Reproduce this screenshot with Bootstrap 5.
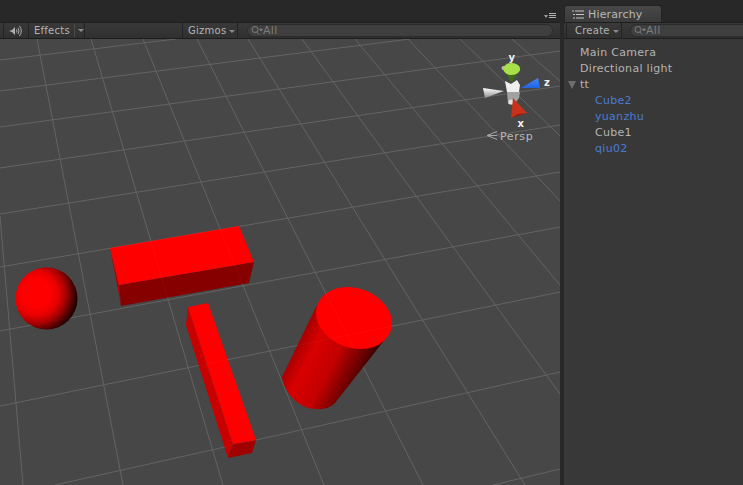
<!DOCTYPE html>
<html lang="en">
<head>
    <meta charset="UTF-8">
    <meta name="viewport" content="width=device-width, initial-scale=1.0">
    <title>Scene and Hierarchy</title>
    <link href="https://cdn.jsdelivr.net/npm/bootstrap@5.3.3/dist/css/bootstrap.min.css" rel="stylesheet">
    <style>
        html, body {
            height: 100%;
            overflow: hidden;
            background: #282828;
        }
        body {
            font-family: "DejaVu Sans", sans-serif;
            font-size: 11px;
            letter-spacing: .3px;
            color: #b4b4b4;
        }
        .editor { height: 485px; width: 743px; }
        .scene-pane { width: 560px; }
        .hier-pane { width: 179px; margin-left: 4px; }
        .tab-strip { height: 22px; background: #282828; }
        .menu-icon { margin: 0 4px 3px 0; }
        .hier-tab {
            width: 98px;
            height: 17px;
            background: linear-gradient(#474747, #3b3b3b);
            border: 1px solid #232323;
            border-bottom: 0;
            border-radius: 3px 3px 0 0;
            color: #b8b8b8;
            font-size: 11px;
            letter-spacing: .15px;
            padding: 1px 0 0 7px;
            line-height: 15px;
        }
        .tool-bar {
            height: 17px;
            background: linear-gradient(#393939, #303030);
            border-top: 1px solid #1e1e1e;
            border-bottom: 1px solid #1e1e1e;
            line-height: 15px;
            font-size: 10px;
            letter-spacing: .25px;
        }
        .tool-cell {
            border-left: 1px solid #232323;
            border-right: 1px solid #232323;
            height: 15px;
            white-space: nowrap;
        }
        .cell-sound { width: 26px; margin-left: 3px; }
        .cell-effects { width: 57px; margin-left: -1px; padding-left: 5px; }
        .cell-gizmos { width: 56px; margin-left: auto; padding-left: 5px; }
        .cell-create { width: 56px; margin-left: 2px; padding-left: 8px; }
        .caret-sep { border-left: 1px solid #4a4a4a; height: 13px; margin-left: 4px; padding-left: 3px; }
        .mini-caret {
            display: inline-block;
            border: 3px solid transparent;
            border-top: 3px solid #8c8c8c;
            border-bottom: 0;
            vertical-align: 1px;
            margin-left: 3px;
        }
        .caret-sep .mini-caret { margin-left: 0; }
        .search-pill {
            height: 13px;
            background: #3f3f3f;
            border: 1px solid #2b2b2b;
            border-radius: 7px;
            color: #7d7d7d;
            line-height: 11px;
            font-size: 11px;
            letter-spacing: .3px;
            padding-left: 3px;
        }
        .scene-search { width: 306px; margin: 0 7px 0 9px; }
        .hier-search { flex: 1; margin: 0 -8px 0 8px; }
        .scene-view { background: #474747; height: 446px; }
        .hier-body { background: #383838; height: 446px; padding-top: 6px; }
        .hier-body .list-group-item {
            background: transparent;
            border: 0;
            color: #b4b4b4;
            height: 16px;
            line-height: 16px;
            padding: 0 0 0 16px;
        }
        .hier-body .list-group-item.nested { padding-left: 31px; }
        .hier-body .list-group-item.prefab { color: #4a7bd2; }
        .fold-arrow {
            border-left: 4px solid transparent;
            border-right: 4px solid transparent;
            border-top: 8px solid #6e6e6e;
            margin: 0 4px 0 4px;
            width: 0;
            height: 0;
            position: absolute;
            left: 0;
            top: 4px;
        }
        .grid-lines { stroke: #fff; stroke-width: 1; }
        .gizmo-label { font-family: "DejaVu Sans", sans-serif; font-weight: 700; font-size: 10px; fill: #f0f0f0; letter-spacing: 0; }
        .persp-label { font-family: "DejaVu Sans", sans-serif; font-size: 11px; fill: #b8b8b8; letter-spacing: .6px; }
    </style>
</head>
<body>
    <div class="editor d-flex">
        <div class="scene-pane d-flex flex-column">
            <div class="tab-strip d-flex justify-content-end align-items-end">
                <svg class="menu-icon" width="12" height="6" viewBox="0 0 12 6">
                    <path d="M0 2h4L2 5z" fill="#a0a0a0"/>
                    <path d="M5 .5h7M5 2.5h7M5 4.5h7" stroke="#b0b0b0" stroke-width="1"/>
                </svg>
            </div>
            <div class="tool-bar d-flex align-items-center">
                <div class="tool-cell cell-sound d-flex align-items-center justify-content-center">
                    <svg width="14" height="12" viewBox="0 0 14 12">
                        <path d="M0 6l3-1 3-3v8l-3-3z" fill="#b0b0b0"/>
                        <path d="M7.500 4.500q1 1.500 0 3M9 3q2 3 0 6M10.500 1q3.500 5 0 10" fill="none" stroke="#b0b0b0" stroke-width="1"/>
                    </svg>
                </div>
                <div class="tool-cell cell-effects d-flex align-items-center">
                    <span>Effects</span>
                    <span class="caret-sep d-flex align-items-center"><span class="mini-caret"></span></span>
                </div>
                <div class="tool-cell cell-gizmos">Gizmos<span class="mini-caret"></span></div>
                <div class="search-pill scene-search d-flex align-items-center">
                    <svg width="12" height="9" viewBox="0 0 12 9">
                        <circle cx="4" cy="3.500" r="3" fill="none" stroke="#7d7d7d"/>
                        <path d="M6 6L8 8.500M8.500 3h3L10 5z" stroke="#7d7d7d" fill="#7d7d7d" stroke-width=".8"/>
                    </svg>
                    <span>All</span>
                </div>
            </div>
            <div class="scene-view">
                <svg class="d-block" width="560" height="446" viewBox="0 39 560 446">
                    <defs>
                        <radialGradient id="ballFill" cx=".33" cy=".42" r=".74">
                            <stop offset=".3" stop-color="#ff0000"/>
                            <stop offset=".48" stop-color="#e80000"/>
                            <stop offset=".65" stop-color="#a80000"/>
                            <stop offset=".82" stop-color="#4a0000"/>
                            <stop offset=".95" stop-color="#0a0000"/>
                        </radialGradient>
                        <linearGradient id="tubeFill" gradientUnits="userSpaceOnUse" x1="284" y1="352" x2="362" y2="392">
                            <stop offset="0" stop-color="#8c0000"/>
                            <stop offset=".28" stop-color="#d80000"/>
                            <stop offset=".55" stop-color="#c40000"/>
                            <stop offset=".82" stop-color="#6a0000"/>
                            <stop offset="1" stop-color="#180000"/>
                        </linearGradient>
                        <linearGradient id="coneBlue" x1="0" y1="0" x2="0" y2="1">
                            <stop offset="0" stop-color="#3f8af8"/>
                            <stop offset="1" stop-color="#2462e0"/>
                        </linearGradient>
                        <linearGradient id="coneWhite" x1="0" y1="0" x2="0" y2="1">
                            <stop offset="0" stop-color="#ffffff"/>
                            <stop offset="1" stop-color="#8e8e8e"/>
                        </linearGradient>
                        <g id="gridSet">
                            <line x1="0" y1="60" x2="176" y2="39"/>
                            <line x1="0" y1="91" x2="410" y2="39"/>
                            <line x1="0" y1="127" x2="560" y2="51"/>
                            <line x1="0" y1="168" x2="560" y2="86"/>
                            <line x1="0" y1="214" x2="560" y2="125"/>
                            <line x1="0" y1="267" x2="560" y2="172"/>
                            <line x1="0" y1="331" x2="560" y2="227"/>
                            <line x1="0" y1="406" x2="560" y2="292"/>
                            <line x1="55" y1="485" x2="560" y2="372"/>
                            <line x1="493" y1="485" x2="560" y2="469"/>
                            <line x1="0" y1="216" x2="23" y2="485"/>
                            <line x1="37" y1="39" x2="123" y2="485"/>
                            <line x1="91" y1="39" x2="223" y2="485"/>
                            <line x1="143" y1="39" x2="324" y2="485"/>
                            <line x1="197" y1="39" x2="423" y2="485"/>
                            <line x1="248" y1="39" x2="525" y2="485"/>
                            <line x1="302" y1="39" x2="560" y2="394"/>
                            <line x1="355" y1="39" x2="560" y2="285"/>
                            <line x1="408" y1="39" x2="560" y2="201"/>
                            <line x1="460" y1="39" x2="560" y2="136"/>
                            <line x1="512" y1="39" x2="560" y2="81"/>
                        </g>
                    </defs>

                    <use href="#gridSet" class="grid-lines" opacity=".12"/>

                    <!-- sphere -->
                    <circle cx="46.500" cy="298.500" r="31" fill="url(#ballFill)"/>

                    <!-- wide box -->
                    <polygon points="110,248 119,285 121,306" fill="#b00000"/>
                    <polygon points="119,285 254,262 249,283 121,306" fill="#870000"/>
                    <polygon points="110,248 239,226 254,262 119,285" fill="#ff0000"/>

                    <!-- long box -->
                    <polygon points="188,307 186,325 228,458 233,444" fill="#c80000"/>
                    <polygon points="233,444 256,440 252,453 228,458" fill="#a00000"/>
                    <polygon points="188,307 208,303 256,440 233,444" fill="#ff0000"/>

                    <!-- cylinder -->
                    <path d="M317 305L282 377C284 392 298 408 315 409C324 409.500 330 408 335 403L386 338z" fill="url(#tubeFill)"/>
                    <ellipse cx="354" cy="318" rx="39" ry="29.800" transform="rotate(20 354 318)" fill="#ff0000"/>

                    <use href="#gridSet" class="grid-lines" opacity=".03"/>

                    <!-- orientation gizmo -->
                    <circle cx="503.500" cy="68" r="2" fill="#b8b8b8"/>
                    <polygon points="506,74 517,74 511.700,83" fill="#3d6b1e"/>
                    <ellipse cx="511.700" cy="69" rx="8.500" ry="6" fill="#a8e04a"/>
                    <polygon points="507,92 520,92 519,98 514,105 508,104" fill="#a2a2a2"/>
                    <circle cx="511" cy="102" r="2.500" fill="#e2e2e2"/>
                    <polygon points="505,81 511,84 517,80 520,85 519,92 507,92" fill="#efefef"/>
                    <polygon points="521,88 538,78 540,88" fill="url(#coneBlue)"/>
                    <polygon points="504,91 483,88 485,98" fill="url(#coneWhite)"/>
                    <polygon points="513,98 527,113 511,118" fill="#c8321a"/>
                    <polygon points="511,118 527,113 518,114" fill="#8c1f10"/>
                    <text class="gizmo-label" x="508.500" y="61">y</text>
                    <text class="gizmo-label" x="544" y="86">z</text>
                    <text class="gizmo-label" x="517.500" y="127">x</text>
                    <path d="M497 131.500L487 135.500L497 139.500M487 135.500H497" fill="none" stroke="#a8a8a8" stroke-width="1"/>
                    <text class="persp-label" x="500" y="140">Persp</text>
                </svg>
            </div>
        </div>

        <div class="hier-pane d-flex flex-column">
            <div class="tab-strip d-flex align-items-end">
                <div class="hier-tab d-flex align-items-center gap-1">
                    <svg width="12" height="9" viewBox="0 0 12 9">
                        <path d="M3 1h9M4 4.500h8M4 8h8" stroke="#c4c4c4" stroke-width="1"/>
                        <path d="M0 .5h2v1H0zM1 4h2v1H1zM1 7.500h2v1H1z" fill="#c4c4c4"/>
                    </svg>
                    <span>Hierarchy</span>
                </div>
            </div>
            <div class="tool-bar d-flex align-items-center">
                <div class="tool-cell cell-create">Create<span class="mini-caret"></span></div>
                <div class="search-pill hier-search d-flex align-items-center">
                    <svg width="12" height="9" viewBox="0 0 12 9">
                        <circle cx="4" cy="3.500" r="3" fill="none" stroke="#7d7d7d"/>
                        <path d="M6 6L8 8.500M8.500 3h3L10 5z" stroke="#7d7d7d" fill="#7d7d7d" stroke-width=".8"/>
                    </svg>
                    <span>All</span>
                </div>
            </div>
            <div class="hier-body">
                <ul class="list-group list-group-flush">
                    <li class="list-group-item">Main Camera</li>
                    <li class="list-group-item">Directional light</li>
                    <li class="list-group-item position-relative"><span class="fold-arrow"></span>tt</li>
                    <li class="list-group-item nested prefab">Cube2</li>
                    <li class="list-group-item nested prefab">yuanzhu</li>
                    <li class="list-group-item nested">Cube1</li>
                    <li class="list-group-item nested prefab">qiu02</li>
                </ul>
            </div>
        </div>
    </div>
    <script src="https://cdn.jsdelivr.net/npm/bootstrap@5.3.3/dist/js/bootstrap.bundle.min.js"></script>
</body>
</html>
